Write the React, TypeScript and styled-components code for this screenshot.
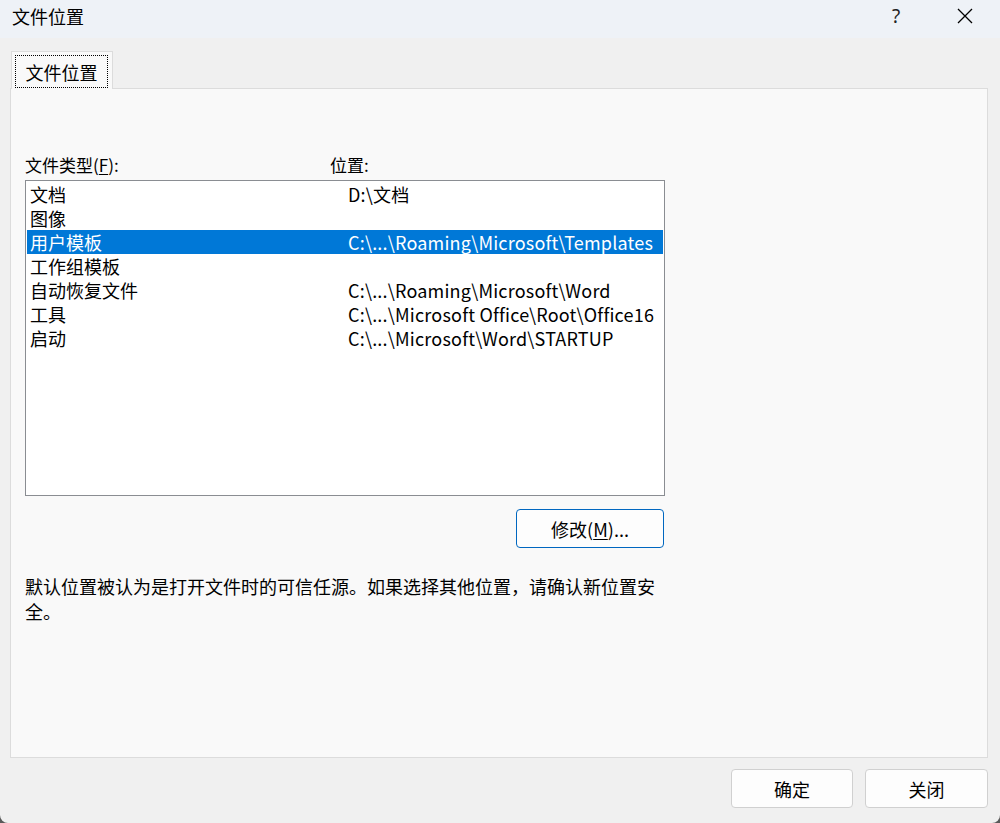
import styled, { createGlobalStyle } from "styled-components";

const GlobalStyle = createGlobalStyle`
  html, body {
    margin: 0;
    padding: 0;
    background: #5a5a5a;
  }
  body {
    font-family: "Noto Sans CJK SC", "Noto Sans", sans-serif;
    font-size: 18px;
    color: #000;
  }
`;

type Row = { type: string; path: string };

const rows: Row[] = [
  { type: "文档", path: "D:\\文档" },
  { type: "图像", path: "" },
  { type: "用户模板", path: "C:\\...\\Roaming\\Microsoft\\Templates" },
  { type: "工作组模板", path: "" },
  { type: "自动恢复文件", path: "C:\\...\\Roaming\\Microsoft\\Word" },
  { type: "工具", path: "C:\\...\\Microsoft Office\\Root\\Office16" },
  { type: "启动", path: "C:\\...\\Microsoft\\Word\\STARTUP" },
];

export default function App() {
  return (
    <>
      <GlobalStyle />
      <Window>
        <TitleBar>
          <Title>文件位置</Title>
          <TitleButtons>
            <HelpButton>?</HelpButton>
            <CloseButton>
              <svg width="16" height="16" viewBox="0 0 16 16">
                <path d="M1 1 L15 15 M15 1 L1 15" stroke="#000" strokeWidth="1.3" />
              </svg>
            </CloseButton>
          </TitleButtons>
        </TitleBar>
        <Body>
          <Tabs>
            <Tab>
              <TabFocus>文件位置</TabFocus>
            </Tab>
          </Tabs>
          <Panel>
            <Headers>
              <HeaderCell $width={305}>
                文件类型(<u>F</u>):
              </HeaderCell>
              <HeaderCell>位置:</HeaderCell>
            </Headers>
            <ListBox>
              {rows.map((r, i) => (
                <ListRow key={r.type} $selected={i === 2}>
                  <TypeCell>{r.type}</TypeCell>
                  <PathCell>{r.path}</PathCell>
                </ListRow>
              ))}
            </ListBox>
            <ModifyRow>
              <Button $primary $width={148}>
                修改(<u>M</u>)...
              </Button>
            </ModifyRow>
            <Note>
              默认位置被认为是打开文件时的可信任源。如果选择其他位置，请确认新位置安全。
            </Note>
          </Panel>
          <Footer>
            <Button $width={122}>确定</Button>
            <Button $width={123}>关闭</Button>
          </Footer>
        </Body>
      </Window>
    </>
  );
}

const Window = styled.div`
  width: 1000px;
  height: 823px;
  background: #f0f0f0;
  border-radius: 0 0 8px 8px;
  display: flex;
  flex-direction: column;
  overflow: hidden;
`;

const TitleBar = styled.div`
  height: 38px;
  background: #eef2f7;
  display: flex;
  align-items: center;
  justify-content: space-between;
  padding-left: 12px;
`;

const Title = styled.div`
  font-size: 18px;
  line-height: 24px;
  margin-top: -6px;
`;

const TitleButtons = styled.div`
  display: flex;
  align-items: center;
  height: 100%;
`;

const HelpButton = styled.div`
  width: 46px;
  height: 100%;
  display: flex;
  align-items: center;
  justify-content: center;
  font-family: "Noto Sans", sans-serif;
  font-size: 19px;
  color: #222;
  margin-right: 11px;
  padding-bottom: 6px;
  box-sizing: border-box;
`;

const CloseButton = styled.div`
  width: 70px;
  height: 100%;
  display: flex;
  align-items: center;
  justify-content: center;
  padding-bottom: 6px;
  box-sizing: border-box;
`;

const Body = styled.div`
  flex: 1;
  display: flex;
  flex-direction: column;
  padding: 13px 12px 14px 10px;
`;

const Tabs = styled.div`
  display: flex;
  padding-left: 1px;
`;

const Tab = styled.div`
  width: 102px;
  height: 38px;
  box-sizing: border-box;
  background: #f9f9f9;
  border: 1px solid #dcdcdc;
  border-bottom: none;
  padding: 3px 4px 1px 3px;
  position: relative;
  z-index: 1;
  margin-bottom: -1px;
`;

const TabFocus = styled.div`
  height: 100%;
  box-sizing: border-box;
  border: 1px dotted #000;
  display: flex;
  align-items: center;
  justify-content: center;
  font-size: 18px;
  line-height: 24px;
`;

const Panel = styled.div`
  height: 670px;
  box-sizing: border-box;
  background: #f9f9f9;
  border: 1px solid #dcdcdc;
  padding: 61px 14px 0 14px;
  display: flex;
  flex-direction: column;
`;

const Headers = styled.div`
  display: flex;
  height: 30px;
  align-items: center;
`;

const HeaderCell = styled.div<{ $width?: number }>`
  width: ${(p) => (p.$width ? `${p.$width}px` : "auto")};
  font-size: 17px;
  line-height: 24px;
  u {
    text-underline-offset: 2px;
  }
`;

const ListBox = styled.div`
  width: 640px;
  height: 316px;
  box-sizing: border-box;
  border: 1px solid #8a8d92;
  background: #fff;
  padding: 1px;
`;

const ListRow = styled.div<{ $selected?: boolean }>`
  display: flex;
  height: 24px;
  align-items: center;
  background: ${(p) => (p.$selected ? "#0078d7" : "transparent")};
  color: ${(p) => (p.$selected ? "#fff" : "#000")};
`;

const TypeCell = styled.div`
  width: 321px;
  padding-left: 3px;
  box-sizing: border-box;
  font-size: 18px;
  line-height: 24px;
`;

const PathCell = styled.div`
  font-size: 18px;
  line-height: 24px;
  letter-spacing: 0.2px;
  white-space: nowrap;
`;

const ModifyRow = styled.div`
  width: 640px;
  display: flex;
  justify-content: flex-end;
  padding-top: 13px;
  padding-right: 1px;
  box-sizing: border-box;
`;

const Button = styled.div<{ $primary?: boolean; $width: number }>`
  width: ${(p) => p.$width}px;
  height: 39px;
  box-sizing: border-box;
  border: 1px solid ${(p) => (p.$primary ? "#0067c0" : "#d0d0d0")};
  border-radius: 4px;
  background: #fdfdfd;
  display: flex;
  align-items: center;
  justify-content: center;
  font-size: 18px;
  line-height: 24px;
  u {
    text-underline-offset: 2px;
  }
`;

const Note = styled.div`
  width: 640px;
  margin-top: 26px;
  font-size: 18px;
  line-height: 25px;
`;

const Footer = styled.div`
  display: flex;
  justify-content: flex-end;
  gap: 12px;
  margin-top: 11px;
`;
